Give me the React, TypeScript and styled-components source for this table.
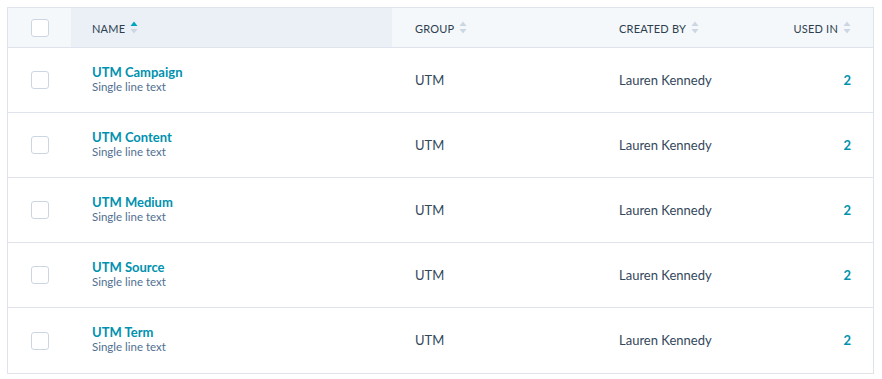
import { FunctionComponent } from "react";
import styled, { createGlobalStyle } from "styled-components";

const GlobalStyle = createGlobalStyle`
  html, body {
    margin: 0;
    padding: 0;
    background: #ffffff;
  }
  body {
    font-family: Lato, "Open Sans", sans-serif;
    -webkit-font-smoothing: antialiased;
  }
`;

const Page = styled.div`
  padding: 7px 8px 7px 7px;
`;

const Table = styled.div`
  border: 1px solid #dfe3eb;
  display: grid;
  grid-template-columns: 63px 321px 204px 1fr 120px;
  color: #33475b;
`;

const HeadCell = styled.div<{ $active?: boolean; $right?: boolean; $pad?: number }>`
  height: 40px;
  box-sizing: border-box;
  display: flex;
  align-items: center;
  justify-content: ${(p) => (p.$right ? "flex-end" : "flex-start")};
  padding: 2px ${(p) => (p.$right ? "22px" : "0")} 0 ${(p) => (p.$right ? 0 : p.$pad ?? 23)}px;
  background-color: ${(p) => (p.$active ? "#eaf0f6" : "#f5f8fa")};
  border-bottom: 1px solid #dfe3eb;
  font-size: 11px;
  font-weight: 400;
  letter-spacing: 0.2px;
  text-transform: uppercase;
  color: #2d3e50;
  gap: 5px;
  svg {
    margin-top: -2px;
  }
`;

const CheckCell = styled.div<{ $head?: boolean }>`
  height: ${(p) => (p.$head ? "40px" : "65px")};
  box-sizing: border-box;
  display: flex;
  align-items: center;
  justify-content: center;
  background-color: ${(p) => (p.$head ? "#f5f8fa" : "#ffffff")};
  border-bottom: 1px solid #dfe3eb;
  &:nth-last-child(-n + 5) {
    border-bottom: none;
  }
`;

const Checkbox = styled.span`
  width: 16px;
  height: 16px;
  border: 1px solid #cbd6e2;
  border-radius: 3px;
  background: #ffffff;
  display: block;
`;

const Cell = styled.div<{ $right?: boolean; $pad?: number }>`
  height: 65px;
  box-sizing: border-box;
  display: flex;
  flex-direction: column;
  justify-content: center;
  align-items: ${(p) => (p.$right ? "flex-end" : "flex-start")};
  padding: 0 ${(p) => (p.$right ? "22px" : "0")} 0 ${(p) => (p.$right ? 0 : p.$pad ?? 23)}px;
  border-bottom: 1px solid #dfe3eb;
  font-size: 13px;
  color: #33475b;
  &:nth-last-child(-n + 5) {
    border-bottom: none;
    height: 64px;
  }
`;

const NameCell = styled(Cell)`
  padding-bottom: 3px;
`;

const NameLink = styled.span`
  color: #0091ae;
  font-size: 13px;
  font-weight: 700;
  line-height: 16px;
`;

const Sub = styled.span`
  color: #516f90;
  font-size: 11.5px;
  line-height: 14px;
`;

const Count = styled.span`
  color: #0091ae;
  font-weight: 700;
  font-size: 13px;
`;

const SortIcon: FunctionComponent<{ active?: boolean }> = ({ active }) => (
  <svg width="8" height="13" viewBox="0 0 8 13">
    <path d="M4 0.5 L7.5 5 L0.5 5 Z" fill={active ? "#00a4bd" : "#cbd6e2"} />
    <path d="M4 12.5 L7.5 8 L0.5 8 Z" fill="#cbd6e2" />
  </svg>
);

const rows = ["UTM Campaign", "UTM Content", "UTM Medium", "UTM Source", "UTM Term"];

const App: FunctionComponent = () => {
  return (
    <Page>
      <GlobalStyle />
      <Table>
        <CheckCell $head>
          <Checkbox />
        </CheckCell>
        <HeadCell $active $pad={21}>
          Name <SortIcon active />
        </HeadCell>
        <HeadCell>
          Group <SortIcon />
        </HeadCell>
        <HeadCell>
          Created by <SortIcon />
        </HeadCell>
        <HeadCell $right>
          Used in <SortIcon />
        </HeadCell>
        {rows.map((name) => [
          <CheckCell key={name + "c"}>
            <Checkbox />
          </CheckCell>,
          <NameCell key={name + "n"} $pad={21}>
            <NameLink>{name}</NameLink>
            <Sub>Single line text</Sub>
          </NameCell>,
          <Cell key={name + "g"}>UTM</Cell>,
          <Cell key={name + "b"}>Lauren Kennedy</Cell>,
          <Cell key={name + "u"} $right>
            <Count>2</Count>
          </Cell>,
        ])}
      </Table>
    </Page>
  );
};

export default App;
